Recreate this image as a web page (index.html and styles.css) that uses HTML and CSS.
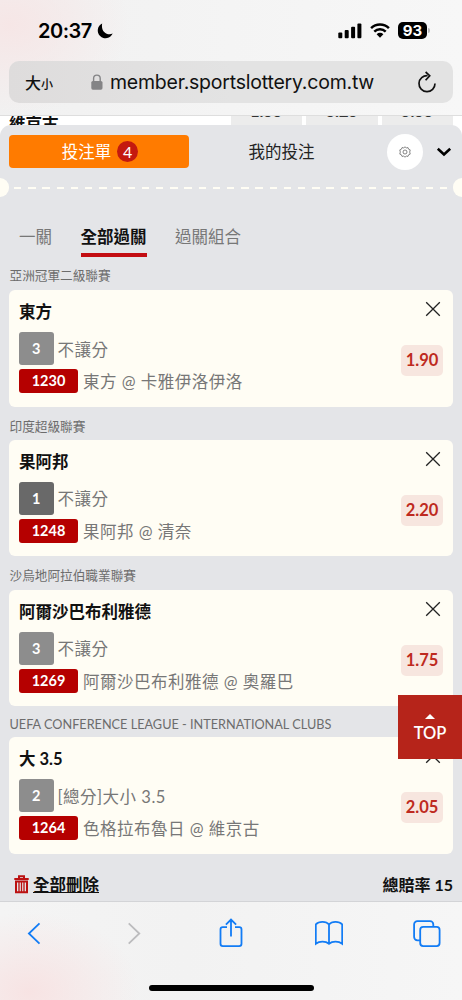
FILE: index.html
```html
<!DOCTYPE html>
<html lang="zh-Hant">
<head>
    <meta charset="UTF-8">
    <meta name="viewport" content="width=device-width, initial-scale=1.0">
    <title>投注單</title>
    <link rel="stylesheet" href="styles.css">
</head>
<body>
    <!-- Status bar and address bar -->
    <header class="browser-top">
        <div class="status-bar">
            <span class="clock">20:37</span>
            <svg class="moon" width="16" height="16" viewBox="0 0 16 16"><path d="M5.2 0.4A7.8 7.8 0 1 0 15.7 10.6C10 13 3.5 8.5 5.2 0.4Z"/></svg>
            <svg class="signal" width="24" height="16" viewBox="0 0 24 16">
                <rect x="0.3" y="9.6" width="4" height="5.6" rx="1"/>
                <rect x="6.7" y="7" width="4" height="8.2" rx="1"/>
                <rect x="13.1" y="3.8" width="4" height="11.4" rx="1"/>
                <rect x="19.4" y="0.5" width="4" height="14.7" rx="1"/>
            </svg>
            <svg class="wifi" width="20" height="15" viewBox="0 0 20 15">
                <path class="arc" d="M1.1 5.1A12.8 12.8 0 0 1 18.9 5.1"/>
                <path class="arc" d="M4.3 8.6A8.2 8.2 0 0 1 15.7 8.6"/>
                <path d="M6.6 11.2A4.9 4.9 0 0 1 13.4 11.2L10 14.7Z"/>
            </svg>
            <span class="battery">93</span>
            <span class="battery-tip"></span>
        </div>
        <div class="address-bar">
            <span class="text-size">大<small>小</small></span>
            <svg class="lock" width="12" height="16" viewBox="0 0 12 16">
                <rect x="0.3" y="7" width="11.2" height="8.7" rx="1.6"/>
                <path d="M2.6 7.5V4.4a3.3 3.3 0 0 1 6.6 0V7.5"/>
            </svg>
            <span class="url">member.sportslottery.com.tw</span>
            <svg class="reload" width="20" height="23" viewBox="0 0 20 23">
                <path d="M10.6 4.7A8 8 0 1 0 18 12.6"/>
                <path d="M8.6 1L12.7 4.7L8.6 9.2"/>
            </svg>
        </div>
    </header>

    <main class="page">
        <!-- Match list behind the bet slip -->
        <div class="match-row">
            <span class="match-team">維京古</span>
            <span class="match-odd">1.55</span>
            <span class="match-odd">3.25</span>
            <span class="match-odd">5.55</span>
        </div>

        <!-- Bet slip -->
        <section class="slip">
            <div class="slip-head">
                <button class="slip-tab active">投注單 <span class="count">4</span></button>
                <button class="slip-tab">我的投注</button>
                <span class="settings">
                    <svg width="12" height="12" viewBox="0 0 12 12">
                        <path d="M6 .8L7.3 1.9L9 1.6L9.6 3.2L11.2 3.9L10.7 6L11.2 8.1L9.6 8.8L9 10.4L7.3 10.1L6 11.2L4.7 10.1L3 10.4L2.4 8.8L.8 8.1L1.3 6L.8 3.9L2.4 3.2L3 1.6L4.7 1.9Z"/>
                        <circle cx="6" cy="6" r="2"/>
                    </svg>
                </span>
                <svg class="chevron" width="16" height="10" viewBox="0 0 16 10"><path d="M1.8 1.8L8 7.4L14.2 1.8"/></svg>
            </div>

            <div class="tear">
                <span class="notch left"></span>
                <span class="dashes"></span>
                <span class="notch right"></span>
            </div>

            <nav class="modes">
                <a>一關</a>
                <a class="active">全部過關</a>
                <a>過關組合</a>
            </nav>

            <h3 class="league">亞洲冠軍二級聯賽</h3>
            <article class="bet">
                <div class="bet-info">
                    <h4>東方</h4>
                    <p class="market"><span class="num">3</span>不讓分</p>
                    <p class="match"><span class="code">1230</span>東方 @ 卡雅伊洛伊洛</p>
                </div>
                <div class="bet-side">
                    <svg class="close" width="16" height="16" viewBox="0 0 16 16"><path d="M1.2 1.2L14.8 14.8M14.8 1.2L1.2 14.8"/></svg>
                    <span class="odds">1.90</span>
                </div>
            </article>

            <h3 class="league">印度超級聯賽</h3>
            <article class="bet">
                <div class="bet-info">
                    <h4>果阿邦</h4>
                    <p class="market"><span class="num dark">1</span>不讓分</p>
                    <p class="match"><span class="code">1248</span>果阿邦 @ 清奈</p>
                </div>
                <div class="bet-side">
                    <svg class="close" width="16" height="16" viewBox="0 0 16 16"><path d="M1.2 1.2L14.8 14.8M14.8 1.2L1.2 14.8"/></svg>
                    <span class="odds">2.20</span>
                </div>
            </article>

            <h3 class="league">沙烏地阿拉伯職業聯賽</h3>
            <article class="bet">
                <div class="bet-info">
                    <h4>阿爾沙巴布利雅德</h4>
                    <p class="market"><span class="num">3</span>不讓分</p>
                    <p class="match"><span class="code">1269</span>阿爾沙巴布利雅德 @ 奧羅巴</p>
                </div>
                <div class="bet-side">
                    <svg class="close" width="16" height="16" viewBox="0 0 16 16"><path d="M1.2 1.2L14.8 14.8M14.8 1.2L1.2 14.8"/></svg>
                    <span class="odds">1.75</span>
                </div>
            </article>

            <h3 class="league latin">UEFA CONFERENCE LEAGUE - INTERNATIONAL CLUBS</h3>
            <article class="bet">
                <div class="bet-info">
                    <h4>大 3.5</h4>
                    <p class="market"><span class="num">2</span>[總分]大小 3.5</p>
                    <p class="match"><span class="code">1264</span>色格拉布魯日 @ 維京古</p>
                </div>
                <div class="bet-side">
                    <svg class="close" width="16" height="16" viewBox="0 0 16 16"><path d="M1.2 1.2L14.8 14.8M14.8 1.2L1.2 14.8"/></svg>
                    <span class="odds">2.05</span>
                </div>
            </article>

            <div class="slip-foot">
                <svg class="trash" width="15" height="19" viewBox="0 0 15 19">
                    <path d="M0.3 4H14.7M5 3.6V1.2H10V3.6"/>
                    <path d="M2 6.5H13V17.2H2Z"/>
                    <path class="bars" d="M5 7V17M7.5 7V17M10 7V17"/>
                </svg>
                <a class="clear">全部刪除</a>
                <span class="total">總賠率 15</span>
            </div>
        </section>

        <a class="to-top"><span class="arrow"></span>TOP</a>
    </main>

    <!-- Browser toolbar -->
    <footer class="browser-bottom">
        <div class="toolbar">
            <svg width="28" height="32" viewBox="0 0 28 32"><path d="M19.5 6.3L8.9 16.5L19.5 26.7"/></svg>
            <svg class="disabled" width="28" height="32" viewBox="0 0 28 32"><path d="M10.7 6.3L21.3 16.5L10.7 26.7"/></svg>
            <svg width="28" height="32" viewBox="0 0 28 32">
                <path d="M10 10.2H5.8A2.3 2.3 0 0 0 3.5 12.5V26.8A2.3 2.3 0 0 0 5.8 29.1H22.2A2.3 2.3 0 0 0 24.5 26.8V12.5A2.3 2.3 0 0 0 22.2 10.2H18"/>
                <path d="M14 19.5V2.7M8.9 7.6L14 2.5L19.1 7.6"/>
            </svg>
            <svg width="28" height="32" viewBox="0 0 28 32">
                <path d="M14 7.4C11.2 4.2 4.2 3.8 0.8 7.4V26.8C4.4 24 10.6 24 14 26.8C17.4 24 23.6 24 27.2 26.8V7.4C23.8 3.8 16.8 4.2 14 7.4V26.8"/>
            </svg>
            <svg width="28" height="32" viewBox="0 0 28 32">
                <rect x="7.2" y="9.9" width="19.4" height="19.2" rx="3"/>
                <path d="M7.2 23.3H4.4A3.3 3.3 0 0 1 1.1 20V7.4A3.3 3.3 0 0 1 4.4 4.1H17A3.3 3.3 0 0 1 20.3 7.4V9.9"/>
            </svg>
        </div>
        <div class="home-bar"></div>
    </footer>
</body>
</html>
```

FILE: styles.css
```css
* {
    box-sizing: border-box;
}

body {
    display: flex;
    flex-direction: column;
    width: 462px;
    height: 1000px;
    margin: 0;
    overflow: hidden;
    font-family: Lato, "Noto Sans CJK TC", sans-serif;
    font-size: 16.5px;
    color: #111;
    background-color: #e4e5e8;
}

h3, h4, p {
    margin: 0;
    font-weight: normal;
}

svg {
    display: block;
    flex: none;
}

/* Status bar and address bar */
.browser-top {
    flex: none;
    height: 116px;
    border-bottom: 1px solid #dedede;
    font-family: Inter, "Noto Sans CJK TC", sans-serif;
    background: radial-gradient(ellipse 120px 90px at 10px 25px, #f6e6e6, rgba(246, 230, 230, 0)), linear-gradient(90deg, #f1f1f1, #f7f7f7);
}

.status-bar {
    display: flex;
    align-items: center;
    height: 61px;
    padding: 0 31px 0 38px;
}

.clock {
    width: 54px;
    font-size: 20px;
    font-weight: 600;
    letter-spacing: -0.5px;
    color: #000;
}

.moon {
    margin-left: 5px;
}

.signal {
    margin-left: auto;
}

.wifi {
    margin: 0 8px;
}

.wifi .arc {
    fill: none;
    stroke: #000;
    stroke-width: 2.5;
}

.battery {
    width: 29px;
    height: 17px;
    border-radius: 5px;
    font-size: 15px;
    font-weight: 700;
    line-height: 17px;
    text-align: center;
    color: #fff;
    background-color: #000;
}

.battery-tip {
    width: 2px;
    height: 5px;
    margin: 0 1px;
    border-radius: 0 2px 2px 0;
    background-color: #bbb;
}

.address-bar {
    display: flex;
    align-items: center;
    height: 42px;
    margin: 0 9px;
    padding: 0 16px;
    border-radius: 10px;
    background: linear-gradient(90deg, #dedcdc, #e3e3e3 50%);
}

.text-size {
    width: 66px;
    font-size: 16px;
    font-weight: 500;
    white-space: nowrap;
}

.text-size small {
    font-size: 12px;
}

.lock rect {
    fill: #848486;
}

.lock path {
    fill: none;
    stroke: #848486;
    stroke-width: 1.4;
}

.url {
    width: 264px;
    margin-left: 7px;
    font-size: 19.5px;
    letter-spacing: -0.22px;
    white-space: nowrap;
}

.reload {
    margin-left: auto;
    fill: none;
    stroke: #111;
    stroke-width: 1.7;
}

/* Page */
.page {
    position: relative;
    flex: 1;
    overflow: hidden;
    background-color: #fff;
}

.match-row {
    display: flex;
    gap: 4px;
    height: 22px;
    padding: 0 9px;
    overflow: hidden;
    line-height: 16px;
}

.match-team {
    flex: 1;
    font-weight: 700;
}

.match-odd {
    width: 71.5px;
    margin-top: -5px;
    font-weight: 900;
    line-height: 1px;
    text-align: center;
    color: #333;
    background-color: #ececec;
}

.slip {
    position: relative;
    height: 800px;
    margin-top: -13px;
    border-radius: 11px 11px 0 0;
    background-color: #e4e5e8;
}

.slip-head {
    display: flex;
    align-items: center;
    height: 53px;
    padding: 0 9px;
}

.slip-tab {
    width: 180px;
    height: 33px;
    padding: 0 0 2px;
    border: none;
    border-radius: 4px;
    font-family: inherit;
    font-size: 16.5px;
    color: #222;
    background: none;
}

.slip-tab.active {
    display: flex;
    align-items: center;
    justify-content: center;
    gap: 6px;
    padding-left: 2px;
    color: #fff;
    background-color: #ff7b00;
}

.slip-tab .count {
    width: 21px;
    height: 21px;
    margin-top: 2px;
    border-radius: 50%;
    font-size: 16px;
    line-height: 21px;
    background-color: #c4190f;
}

.slip-tab + .slip-tab {
    width: 185px;
}

.settings {
    display: flex;
    align-items: center;
    justify-content: center;
    width: 36px;
    height: 36px;
    margin-left: 13px;
    border-radius: 50%;
    background-color: #fff;
}

.settings svg {
    fill: none;
    stroke: #666;
    stroke-width: 0.8;
}

.chevron {
    margin: 1px 0 0 13px;
    fill: none;
    stroke: #000;
    stroke-width: 2.6;
}

.tear {
    display: flex;
    align-items: center;
    height: 19px;
}

.notch {
    width: 9px;
    height: 19px;
    background-color: #fffdf4;
}

.notch.left {
    border-radius: 0 10px 10px 0;
}

.notch.right {
    border-radius: 10px 0 0 10px;
}

.dashes {
    flex: 1;
    height: 2px;
    margin: 1px 5px 0;
    background: repeating-linear-gradient(90deg, #fffdf4 0, #fffdf4 7.5px, transparent 7.5px, transparent 14.2px);
}

.modes {
    display: flex;
    gap: 28.5px;
    height: 60px;
    margin-bottom: 9px;
    padding: 0 19px;
    line-height: 27px;
    color: #777;
}

.modes a {
    height: 33px;
    margin-top: 27px;
}

.modes .active {
    border-bottom: 4px solid #c30d12;
    font-weight: 700;
    color: #111;
}

/* Bets */
.league {
    height: 33.2px;
    padding: 0 9.5px;
    font-size: 12.65px;
    line-height: 39px;
    color: #6c6c6c;
}

.modes + .league {
    height: 24px;
    line-height: 20px;
}

.league.latin {
    height: 31px;
    font-size: 12.7px;
    line-height: 37px;
}

.bet {
    display: flex;
    justify-content: space-between;
    height: 116.6px;
    margin: 0 9px;
    padding: 0 10px;
    border-radius: 6px;
    background-color: #fffdf4;
}

.bet h4 {
    height: 42px;
    font-weight: 700;
    line-height: 45px;
}

.market, .match {
    display: flex;
    align-items: center;
    letter-spacing: 0.5px;
    color: #777;
}

.market {
    height: 33px;
    margin-bottom: 4px;
}

.match {
    height: 24px;
}

.num, .code {
    border-radius: 3px;
    font-weight: 700;
    font-size: 14.5px;
    letter-spacing: 0;
    text-align: center;
    color: #fff;
}

.num {
    width: 34.5px;
    height: 33px;
    margin-right: 4px;
    line-height: 33px;
    background-color: #8d8d8d;
}

.num.dark {
    background-color: #696969;
}

.code {
    width: 59px;
    height: 24px;
    margin-right: 5px;
    line-height: 24px;
    background-color: #b50000;
}

.bet-side {
    display: flex;
    flex-direction: column;
    align-items: flex-end;
    padding-top: 11px;
}

.close {
    margin-right: 2px;
    fill: none;
    stroke: #222;
    stroke-width: 1.3;
}

.odds {
    width: 42px;
    height: 31px;
    margin-top: 28px;
    border-radius: 5px;
    font-weight: 700;
    line-height: 31px;
    text-align: center;
    color: #be2a20;
    background-color: #f7e6df;
}

.slip-foot {
    display: flex;
    align-items: center;
    height: 61px;
    padding: 0 9px 0 14px;
    font-weight: 700;
}

.trash {
    fill: none;
    stroke: #bb1111;
    stroke-width: 2;
}

.trash .bars {
    stroke-width: 1.3;
}

.clear {
    margin-left: 4px;
    text-decoration: underline;
}

.total {
    margin-left: auto;
    font-size: 16px;
}

/* Back to top */
.to-top {
    position: absolute;
    right: 0;
    top: 579px;
    display: flex;
    flex-direction: column;
    align-items: center;
    width: 64px;
    height: 64px;
    padding-top: 19px;
    font-weight: 600;
    line-height: 28px;
    color: #fff;
    background-color: #b6241a;
}

.arrow {
    border: 5px solid transparent;
    border-top: none;
    border-bottom-color: #fff;
}

/* Browser toolbar */
.browser-bottom {
    display: flex;
    flex-direction: column;
    justify-content: space-between;
    align-items: center;
    flex: none;
    height: 99px;
    padding-bottom: 9px;
    border-top: 1px solid #d3d4d7;
    background: radial-gradient(ellipse 110px 80px at 30px 90px, #f7e3e3, rgba(247, 227, 227, 0)), linear-gradient(90deg, #f4f4f4, #f2f2f2 40%, #f6f6f6);
}

.toolbar {
    display: flex;
    justify-content: space-between;
    width: 100%;
    padding: 15px 21px 0 20px;
}

.toolbar svg {
    fill: none;
    stroke: #127cf5;
    stroke-width: 1.8;
}

.toolbar .disabled {
    stroke: #bcbcbe;
}

.home-bar {
    width: 165px;
    height: 6px;
    border-radius: 3px;
    background-color: #000;
}
```
